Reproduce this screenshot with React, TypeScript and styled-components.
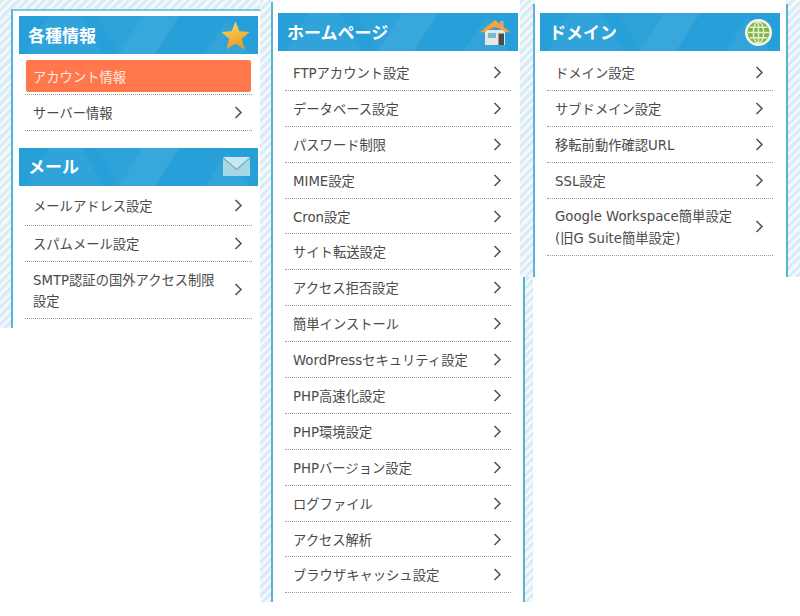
import React from "react";
import styled, { createGlobalStyle } from "styled-components";

const Global = createGlobalStyle`
  html, body { margin: 0; padding: 0; background: #fff; }
  body { width: 800px; height: 616px; overflow: hidden; font-family: "DejaVu Sans", "Noto Sans CJK JP", sans-serif; }
`;

const stripes = `repeating-linear-gradient(135deg, #d9ebf4 0 3px, #f2f8fb 3px 6px)`;

const triangles = encodeURIComponent(
  `<svg xmlns="http://www.w3.org/2000/svg" width="240" height="38"><g fill="#fff"><polygon points="8,38 30,0 62,0 84,38" fill-opacity=".04"/><polygon points="100,38 124,0 160,0 136,38" fill-opacity=".08"/><polygon points="78,0 100,38 124,0" fill-opacity=".03"/><polygon points="186,38 208,4 230,38" fill-opacity=".05"/></g></svg>`
);

const Page = styled.div`
  display: flex;
  align-items: flex-start;
  width: 800px;
`;

const Column = styled.section<{ $w: number; $h: number; $pt: number; $pl: number; $pr: number; $over?: boolean }>`
  box-sizing: border-box;
  position: relative;
  width: ${(p) => p.$w}px;
  height: ${(p) => p.$h}px;
  flex: none;
  margin-left: ${(p) => (p.$over ? -13 : 0)}px;
  padding: ${(p) => p.$pt}px ${(p) => p.$pr}px 0 ${(p) => p.$pl}px;
  background: ${stripes};
`;

const Card = styled.div<{ $top?: boolean; $right?: boolean; $lineTop?: number }>`
  box-sizing: border-box;
  height: 100%;
  background: #fff;
  border-left: 2px solid #57b4d6;
  border-top: ${(p) => (p.$top ? "2px solid #7cc5de" : "none")};
  border-right: ${(p) => (p.$right ? "2px solid #57b4d6" : "none")};
  ${(p) =>
    p.$lineTop
      ? `border-image: linear-gradient(to bottom, #e6f2f8 0 ${p.$lineTop}px, #57b4d6 ${p.$lineTop}px) 1;`
      : ""}
`;

const Group = styled.div<{ $pl: number; $pt: number; $w: number }>`
  padding: ${(p) => p.$pt}px 0 0 ${(p) => p.$pl}px;
  width: ${(p) => p.$w}px;
`;

const Header = styled.h2`
  display: flex;
  align-items: center;
  justify-content: space-between;
  box-sizing: border-box;
  height: 38px;
  margin: 0;
  padding: 0 8px 0 9px;
  color: #fff;
  font-family: "Noto Sans CJK JP", sans-serif;
  font-size: 17px;
  font-weight: 700;
  background-color: #27a0d9;
  background-image: url("data:image/svg+xml,${triangles}");
`;

const HeaderLabel = styled.span`
  padding-bottom: 2px;
`;

const Icon = styled.svg`
  display: block;
  flex: none;
`;

const List = styled.ul<{ $m: number; $pt?: number }>`
  list-style: none;
  margin: 0 ${(p) => p.$m}px;
  padding: ${(p) => p.$pt ?? 0}px 0 0;
`;

const Row = styled.li<{ $h?: number; $lh?: number }>`
  display: flex;
  align-items: center;
  justify-content: space-between;
  box-sizing: border-box;
  height: ${(p) => p.$h ?? 35.9}px;
  padding: 0 9px 0 8px;
  border-bottom: 1px dotted #9a9a9a;
  color: #4a4a4a;
  font-size: 13.3px;
  line-height: ${(p) => p.$lh ?? 20}px;
`;

const RowLabel = styled.span`
  padding-top: 3px;
`;

const Active = styled.li`
  display: flex;
  align-items: center;
  box-sizing: border-box;
  height: 32px;
  margin: 6px 1px 2px;
  padding: 0 7px;
  background: #ff774a;
  border-radius: 2px;
  color: #ffe9e0;
  font-size: 13.3px;
`;

const Divider = styled.li`
  border-bottom: 1px dotted #9a9a9a;
`;

const Chevron = () => (
  <Icon width="9" height="13" viewBox="0 0 9 13" fill="none" stroke="#555" strokeWidth="1.6">
    <path d="M1.5 1 L7 6.5 L1.5 12" />
  </Icon>
);

const Star = () => (
  <Icon width="29" height="29" viewBox="0 0 30 30">
    <defs>
      <linearGradient id="star" x1="0" y1="0" x2="0.3" y2="1">
        <stop offset="0" stopColor="#ffe05a" />
        <stop offset="1" stopColor="#eb9a2a" />
      </linearGradient>
    </defs>
    <path d="M15 0.5 L19 10.5 L29.5 11.5 L21.5 18.5 L24.5 29.5 L15 23.5 L5.5 29.5 L8.5 18.5 L0.5 11.5 L11 10.5 Z" fill="url(#star)" />
  </Icon>
);

const Mail = () => (
  <Icon width="27" height="19" viewBox="0 0 27 19">
    <rect width="27" height="19" fill="#a6d8e8" />
    <path d="M0 0 H27 L13.5 12 Z" fill="#c6e8f2" />
    <path d="M0 1 L13.5 12.5 L27 1" fill="none" stroke="#7fa6b6" strokeWidth="1.2" />
  </Icon>
);

const House = () => (
  <Icon width="30" height="26" viewBox="0 0 30 26">
    <rect x="5" y="11" width="20" height="15" fill="#e9e8de" />
    <rect x="20" y="2" width="3.5" height="8" fill="#c9a98a" />
    <path d="M0 13 L15 1 L30 13 L26 13.5 L15 6 L4 13.5 Z" fill="#f7a13e" />
    <path d="M4 12 L15 3 L26 12 L15 8 Z" fill="#f7a13e" />
    <rect x="8" y="14" width="8" height="5" fill="#73bcd8" />
    <rect x="18.5" y="14.5" width="5.5" height="11.5" fill="#4a4a4a" />
  </Icon>
);

const Globe = () => (
  <Icon width="27" height="27" viewBox="0 0 26 26">
    <circle cx="13" cy="13" r="13" fill="#f2f7e8" />
    <circle cx="13" cy="13" r="10.5" fill="#7fb548" />
    <g fill="none" stroke="#e6f1d4" strokeWidth="1.4">
      <ellipse cx="13" cy="13" rx="5" ry="10.5" />
      <path d="M13 2.5 V23.5 M2.5 13 H23.5 M4.5 8 H21.5 M4.5 18 H21.5" />
    </g>
  </Icon>
);

const rows = (items: string[]) =>
  items.map((t) => (
    <Row key={t}>
      <RowLabel>{t}</RowLabel>
      <Chevron />
    </Row>
  ));

export default function App() {
  return (
    <Page>
      <Global />
      <Column $w={260} $h={328} $pt={9} $pl={11} $pr={0}>
        <Card $top>
          <Group $pl={6} $pt={5} $w={239}>
            <Header><HeaderLabel>各種情報</HeaderLabel><Star /></Header>
            <List $m={6}>
              <Active>アカウント情報</Active>
              <Divider />
              {rows(["サーバー情報"])}
            </List>
          </Group>
          <Group $pl={6} $pt={17} $w={239}>
            <Header><HeaderLabel>メール</HeaderLabel><Mail /></Header>
            <List $m={6}>
              <Row $h={40}><RowLabel>メールアドレス設定</RowLabel><Chevron /></Row>
              {rows(["スパムメール設定"])}
              <Row $h={57} $lh={21}><RowLabel>SMTP認証の国外アクセス制限<br />設定</RowLabel><Chevron /></Row>
            </List>
          </Group>
        </Card>
      </Column>
      <Column $w={273} $h={602} $pt={0} $pl={11} $pr={8}>
        <Card $right $lineTop={3}>
          <Group $pl={5} $pt={13} $w={240}>
            <Header><HeaderLabel>ホームページ</HeaderLabel><House /></Header>
            <List $m={7} $pt={4}>
              {rows(["FTPアカウント設定", "データベース設定", "パスワード制限", "MIME設定", "Cron設定", "サイト転送設定", "アクセス拒否設定", "簡単インストール", "WordPressセキュリティ設定", "PHP高速化設定", "PHP環境設定", "PHPバージョン設定", "ログファイル", "アクセス解析", "ブラウザキャッシュ設定"])}
            </List>
          </Group>
        </Card>
      </Column>
      <Column $over $w={280} $h={277} $pt={0} $pl={13} $pr={12}>
        <Card $right $lineTop={5}>
          <Group $pl={5} $pt={13} $w={240}>
            <Header><HeaderLabel>ドメイン</HeaderLabel><Globe /></Header>
            <List $m={7} $pt={4}>
              {rows(["ドメイン設定", "サブドメイン設定", "移転前動作確認URL", "SSL設定"])}
              <Row $h={57} $lh={22}><RowLabel>Google Workspace簡単設定<br />(旧G Suite簡単設定)</RowLabel><Chevron /></Row>
            </List>
          </Group>
        </Card>
      </Column>
    </Page>
  );
}
